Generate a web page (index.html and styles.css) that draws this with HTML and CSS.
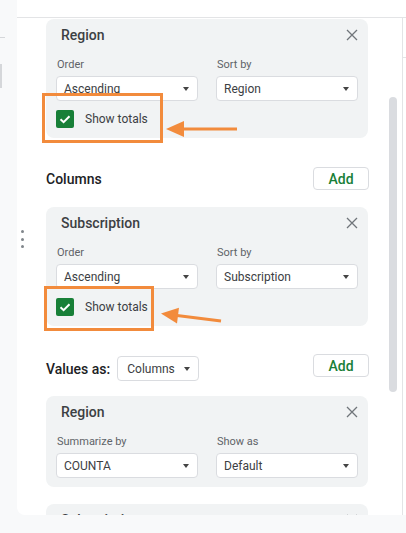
FILE: index.html
```html
<!DOCTYPE html>
<html lang="en">
<head>
    <meta charset="UTF-8">
    <meta name="viewport" content="width=device-width, initial-scale=1.0">
    <title>Pivot table editor</title>
    <link rel="stylesheet" href="styles.css">
</head>
<body>
    <div class="app">
        <div class="main">
            <div class="gutter">
                <div class="gutter-tick"></div>
                <div class="gutter-bar"></div>
            </div>
            <div class="sidebar">
                <div class="sidebar-top"></div>
                <div class="sidebar-body">
                    <div class="scroll">
                        <!-- Rows: Region -->
                        <div class="card first">
                            <div class="card-head">
                                <span class="card-title">Region</span>
                                <svg class="close" width="12" height="12" viewBox="0 0 12 12"><path d="M1 1L11 11M11 1L1 11"/></svg>
                            </div>
                            <div class="fields">
                                <div class="field">
                                    <label>Order</label>
                                    <div class="select"><span>Ascending</span><i class="caret"></i></div>
                                </div>
                                <div class="field">
                                    <label>Sort by</label>
                                    <div class="select"><span>Region</span><i class="caret"></i></div>
                                </div>
                            </div>
                            <div class="check-row">
                                <span class="checkbox"><svg width="18" height="18" viewBox="0 0 18 18"><path d="M4.5 9.2L7.6 12.2L13.5 6.2"/></svg></span>
                                <span>Show totals</span>
                            </div>
                        </div>

                        <div class="section-row">
                            <span class="section-title">Columns</span>
                            <button class="add">Add</button>
                        </div>

                        <div class="card">
                            <span class="drag">
                                <i></i><i></i><i></i>
                            </span>
                            <div class="card-head">
                                <span class="card-title">Subscription</span>
                                <svg class="close" width="12" height="12" viewBox="0 0 12 12"><path d="M1 1L11 11M11 1L1 11"/></svg>
                            </div>
                            <div class="fields">
                                <div class="field">
                                    <label>Order</label>
                                    <div class="select"><span>Ascending</span><i class="caret"></i></div>
                                </div>
                                <div class="field">
                                    <label>Sort by</label>
                                    <div class="select"><span>Subscription</span><i class="caret"></i></div>
                                </div>
                            </div>
                            <div class="check-row">
                                <span class="checkbox"><svg width="18" height="18" viewBox="0 0 18 18"><path d="M4.5 9.2L7.6 12.2L13.5 6.2"/></svg></span>
                                <span>Show totals</span>
                            </div>
                        </div>

                        <div class="section-row values">
                            <div class="values-left">
                                <span class="section-title">Values as:</span>
                                <div class="select small"><span>Columns</span><i class="caret"></i></div>
                            </div>
                            <button class="add">Add</button>
                        </div>

                        <div class="card values-card">
                            <div class="card-head">
                                <span class="card-title">Region</span>
                                <svg class="close" width="12" height="12" viewBox="0 0 12 12"><path d="M1 1L11 11M11 1L1 11"/></svg>
                            </div>
                            <div class="fields">
                                <div class="field">
                                    <label>Summarize by</label>
                                    <div class="select"><span>COUNTA</span><i class="caret"></i></div>
                                </div>
                                <div class="field">
                                    <label>Show as</label>
                                    <div class="select"><span>Default</span><i class="caret"></i></div>
                                </div>
                            </div>
                        </div>

                        <div class="card values-card last">
                            <div class="card-head">
                                <span class="card-title">Subscription</span>
                                <svg class="close" width="12" height="12" viewBox="0 0 12 12"><path d="M1 1L11 11M11 1L1 11"/></svg>
                            </div>
                        </div>

                        <div class="scrollbar"></div>
                    </div>
                    <div class="edge"><div class="edge-tick"></div></div>
                </div>
            </div>
        </div>
        <div class="bottom-bar"></div>
    </div>

    <!-- annotation layer -->
    <svg class="notes" width="406" height="533" viewBox="0 0 406 533">
        <rect x="43.5" y="94.5" width="118" height="47"/>
        <line x1="237" y1="129" x2="180" y2="129"/>
        <polygon points="166,129 184,121 184,137"/>
        <rect x="45.5" y="287.5" width="107" height="42"/>
        <line x1="221" y1="321" x2="177" y2="315.6"/>
        <polygon points="161,313.5 179,307.7 177,323.5"/>
    </svg>
</body>
</html>
```

FILE: styles.css
```css
/* General */
body {
    margin: 0;
    background-color: #f8f9fa;
    font-family: Roboto, "Liberation Sans", Arial, sans-serif;
    color: #3c4043;
    overflow: hidden;
    position: relative;
}

.app {
    width: 406px;
    height: 533px;
    display: flex;
    flex-direction: column;
}

.main {
    height: 517px;
    display: flex;
}

/* Left strip (sheet behind the panel) */
.gutter {
    width: 17px;
    flex-shrink: 0;
}

.gutter-tick {
    margin-top: 37px;
    width: 5px;
    height: 1px;
    background-color: #d5d7da;
}

.gutter-bar {
    margin-top: 26px;
    width: 2px;
    height: 24px;
    background-color: #d5d7da;
}

/* Side panel */
.sidebar {
    flex: 1;
    background-color: #fff;
    display: flex;
    flex-direction: column;
    border-bottom-left-radius: 8px;
    overflow: hidden;
    margin-bottom: 2px;
}

.sidebar-top {
    height: 17px;
    border-bottom: 1px solid #e3e4e6;
    flex-shrink: 0;
}

.sidebar-body {
    flex: 1;
    display: flex;
    overflow: hidden;
}

.scroll {
    flex: 1;
    position: relative;
    padding: 1px 34px 0 29px;
}

.edge {
    width: 3px;
    border-left: 1px solid #e3e4e6;
}

.edge-tick {
    margin-top: 39px;
    height: 1px;
    background-color: #e3e4e6;
}

.scrollbar {
    position: absolute;
    right: 5px;
    top: 79px;
    width: 8px;
    height: 295px;
    border-radius: 4px;
    background-color: #dadce0;
}

/* Cards */
.card {
    position: relative;
    background-color: #f1f3f4;
    border-radius: 8px;
    padding: 0 10px 10px;
}

.card.values-card {
    padding-bottom: 9px;
}

.card-head {
    height: 31px;
    display: flex;
    align-items: center;
    justify-content: space-between;
    padding-left: 5px;
}

.card-title {
    font-size: 14px;
    font-weight: 500;
    color: #3c4043;
}

.close path {
    stroke: #70757a;
    stroke-width: 1.3;
    fill: none;
}

.fields {
    display: grid;
    grid-template-columns: 1fr 1fr;
    column-gap: 18px;
}

.field label {
    display: block;
    margin-top: 8px;
    padding-left: 1px;
    font-size: 11px;
    line-height: 14px;
    color: #5f6368;
}

.select {
    margin-top: 4px;
    height: 25px;
    box-sizing: border-box;
    background-color: #fff;
    border: 1px solid #dadce0;
    border-radius: 4px;
    display: flex;
    align-items: center;
    justify-content: space-between;
    padding: 0 8px 0 7px;
    font-size: 12px;
    color: #3c4043;
}

.caret {
    width: 0;
    height: 0;
    border-left: 3.5px solid transparent;
    border-right: 3.5px solid transparent;
    border-top: 4px solid #444;
}

.check-row {
    margin-top: 9px;
    height: 18px;
    display: flex;
    align-items: center;
    gap: 11px;
    font-size: 12px;
    color: #3c4043;
}

.checkbox {
    width: 18px;
    height: 18px;
    border-radius: 2px;
    background-color: #188038;
    display: flex;
}

.checkbox path {
    stroke: #fff;
    stroke-width: 2;
    fill: none;
}

.drag {
    position: absolute;
    left: -25px;
    top: 23px;
    display: flex;
    flex-direction: column;
    gap: 4.5px;
}

.drag i {
    width: 3px;
    height: 3px;
    border-radius: 50%;
    background-color: #80868b;
}

/* Section rows */
.section-row {
    margin-top: 29px;
    margin-bottom: 17px;
    height: 23px;
    display: flex;
    align-items: center;
    justify-content: space-between;
}

.section-title {
    font-size: 14px;
    font-weight: 500;
    color: #202124;
}

.add {
    width: 56px;
    height: 23px;
    margin-right: -1px;
    background-color: #fff;
    border: 1px solid #dadce0;
    border-radius: 4px;
    font-family: inherit;
    font-size: 14px;
    font-weight: 500;
    color: #188038;
    padding: 0;
}

.section-row.values {
    margin-top: 28px;
    margin-bottom: 15px;
    height: 27px;
    align-items: flex-start;
}

.values-left {
    margin-top: 2px;
    display: flex;
    align-items: center;
    gap: 7px;
}

.select.small {
    margin-top: 0;
    width: 82px;
    padding: 0 8px 0 9px;
}

.card.last {
    margin-top: 17px;
}

/* Orange annotations */
.notes {
    position: absolute;
    top: 0;
    left: 0;
    pointer-events: none;
}

.notes rect {
    fill: none;
    stroke: #f28b3c;
    stroke-width: 3;
}

.notes line {
    stroke: #f28b3c;
    stroke-width: 3;
}

.notes polygon {
    fill: #f28b3c;
}
```
